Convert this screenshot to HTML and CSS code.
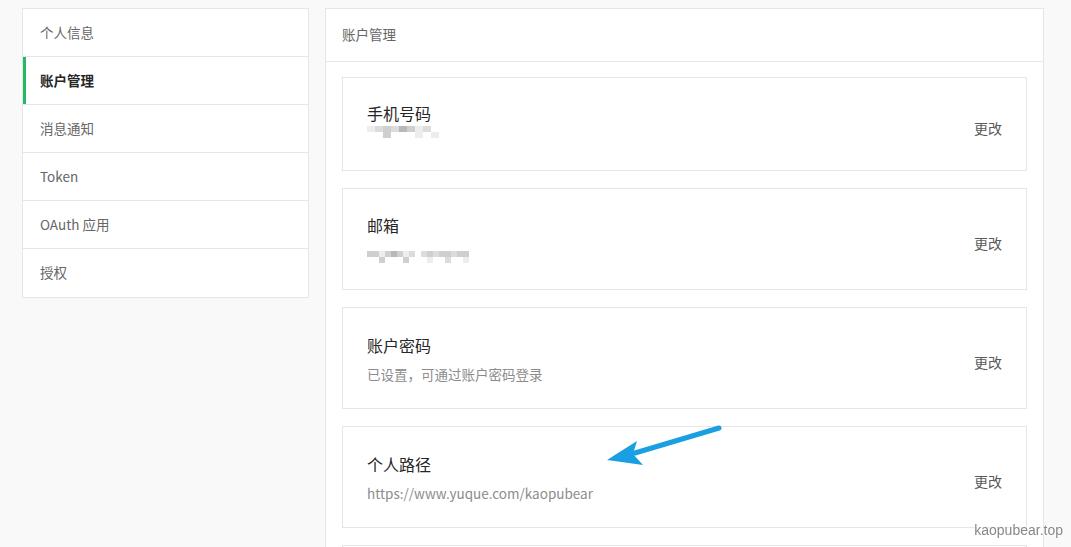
FILE: index.html
```html
<!DOCTYPE html>
<html lang="zh-CN">
  <head>
    <meta charset="UTF-8" />
    <title>账户管理</title>
    <link rel="stylesheet" href="styles.css">
  </head>
  <body>
    <div class="layout">
      <!-- 左侧菜单 -->
      <ul class="side-menu">
        <li class="menu-item">个人信息</li>
        <li class="menu-item active">账户管理</li>
        <li class="menu-item">消息通知</li>
        <li class="menu-item">Token</li>
        <li class="menu-item">OAuth 应用</li>
        <li class="menu-item">授权</li>
      </ul>

      <!-- 右侧内容 -->
      <div class="main-panel">
        <div class="panel-header">账户管理</div>
        <div class="panel-body">
          <div class="setting-card card-phone">
            <div class="card-info">
              <div class="card-title">手机号码</div>
              <div class="mosaic mosaic-phone">
                <i class="m1"></i><i class="m2"></i><i class="m3"></i><i class="m2"></i><i class="m4"></i><i class="m3"></i><i class="m1"></i><i class="m2"></i><i class="m0"></i>
                <i class="m0"></i><i class="m0"></i><i class="m3"></i><i class="m0"></i><i class="m0"></i><i class="m0"></i><i class="m1"></i><i class="m0"></i><i class="m1"></i>
              </div>
            </div>
            <span class="card-action">更改</span>
          </div>

          <div class="setting-card">
            <div class="card-info">
              <div class="card-title">邮箱</div>
              <div class="mosaic mosaic-mail">
                <i class="m3"></i><i class="m3"></i><i class="m1"></i><i class="m3"></i><i class="m4"></i><i class="m3"></i><i class="m1"></i><i class="m2"></i><i class="m0"></i><i class="m2"></i><i class="m3"></i><i class="m2"></i><i class="m3"></i><i class="m3"></i><i class="m2"></i><i class="m3"></i><i class="m3"></i>
                <i class="m0"></i><i class="m0"></i><i class="m3"></i><i class="m0"></i><i class="m0"></i><i class="m0"></i><i class="m3"></i><i class="m0"></i><i class="m0"></i><i class="m0"></i><i class="m1"></i><i class="m0"></i><i class="m0"></i><i class="m2"></i><i class="m0"></i><i class="m0"></i><i class="m1"></i>
              </div>
            </div>
            <span class="card-action">更改</span>
          </div>

          <div class="setting-card">
            <div class="card-info">
              <div class="card-title">账户密码</div>
              <div class="card-desc">已设置，可通过账户密码登录</div>
            </div>
            <span class="card-action">更改</span>
          </div>

          <div class="setting-card">
            <div class="card-info">
              <div class="card-title">个人路径</div>
              <div class="card-desc">https://www.yuque.com/kaopubear</div>
            </div>
            <span class="card-action">更改</span>
            <!-- 标注箭头 -->
            <svg class="note-arrow" width="120" height="44" viewBox="0 0 120 44">
              <path d="M114 4 L30 29" stroke="#1a9fe2" stroke-width="5" stroke-linecap="round" fill="none"/>
              <path d="M2 36 L32 17 L28 30 L38 41 Z" fill="#1a9fe2"/>
            </svg>
          </div>

          <div class="setting-card"></div>
        </div>
      </div>
    </div>

    <div class="watermark">kaopubear.top</div>
  </body>
</html>
```

FILE: styles.css
```css
/* 全局样式 */
* {
  margin: 0;
  padding: 0;
  box-sizing: border-box;
}

html,
body {
  height: 100%;
  overflow: hidden;
}

body {
  background-color: #f9f9f9;
  font-family: "Noto Sans CJK SC", "Liberation Sans", sans-serif;
  color: #262626;
}

.layout {
  display: flex;
  align-items: flex-start;
  gap: 16px;
  padding: 8px 27px 0 22px;
}

/* 左侧菜单 */
.side-menu {
  list-style: none;
  width: 287px;
  flex-shrink: 0;
  background-color: #fff;
  border: 1px solid #e6e6e6;
}

.menu-item {
  height: 48px;
  line-height: 47px;
  padding-left: 17px;
  font-size: 13.5px;
  color: #666;
  border-bottom: 1px solid #e6e6e6;
}

.menu-item:last-child {
  border-bottom: none;
}

.menu-item.active {
  color: #262626;
  font-weight: bold;
  box-shadow: inset 3px 0 0 #25b864;
}

/* 右侧内容 */
.main-panel {
  flex: 1;
  height: 560px;
  background-color: #fff;
  border: 1px solid #e6e6e6;
}

.panel-header {
  height: 53px;
  line-height: 50px;
  padding-left: 16px;
  font-size: 13.5px;
  color: #666;
  border-bottom: 1px solid #e6e6e6;
}

.panel-body {
  display: flex;
  flex-direction: column;
  gap: 17px;
  padding: 15px 16px;
}

.setting-card {
  position: relative;
  display: flex;
  align-items: center;
  justify-content: space-between;
  min-height: 102px;
  padding: 1px 24px 0;
  border: 1px solid #e6e6e6;
}

.card-phone {
  min-height: 94px;
  padding-top: 0;
}

.card-info {
  display: flex;
  flex-direction: column;
}

.card-title {
  font-size: 16px;
  line-height: 24px;
  color: #262626;
}

.card-desc {
  margin-top: 6px;
  font-size: 13.5px;
  line-height: 22px;
  color: #8c8c8c;
}

.card-action {
  margin-top: 7px;
  font-size: 14px;
  color: #595959;
}

/* 打码区域 */
.mosaic {
  display: grid;
  grid-auto-rows: 6px;
}

.mosaic-phone {
  grid-template-columns: repeat(9, 8px);
  margin-top: 1px;
  margin-bottom: 9px;
}

.mosaic-mail {
  grid-template-columns: repeat(17, 6px);
  margin-top: 14px;
  margin-bottom: 4px;
}

.mosaic i {
  display: block;
}

.m0 { background-color: #fff; }
.m1 { background-color: #ededed; }
.m2 { background-color: #dcdcdc; }
.m3 { background-color: #cfcfcf; }
.m4 { background-color: #b8b8b8; }

/* 标注箭头 */
.note-arrow {
  position: absolute;
  left: 262px;
  top: -3px;
}

/* 水印 */
.watermark {
  position: fixed;
  right: 8px;
  bottom: 9px;
  font-family: "Liberation Sans", sans-serif;
  font-size: 14px;
  color: #888;
  text-shadow: 0 0 2px #fff, 0 0 2px #fff, 0 0 2px #fff;
}
```
